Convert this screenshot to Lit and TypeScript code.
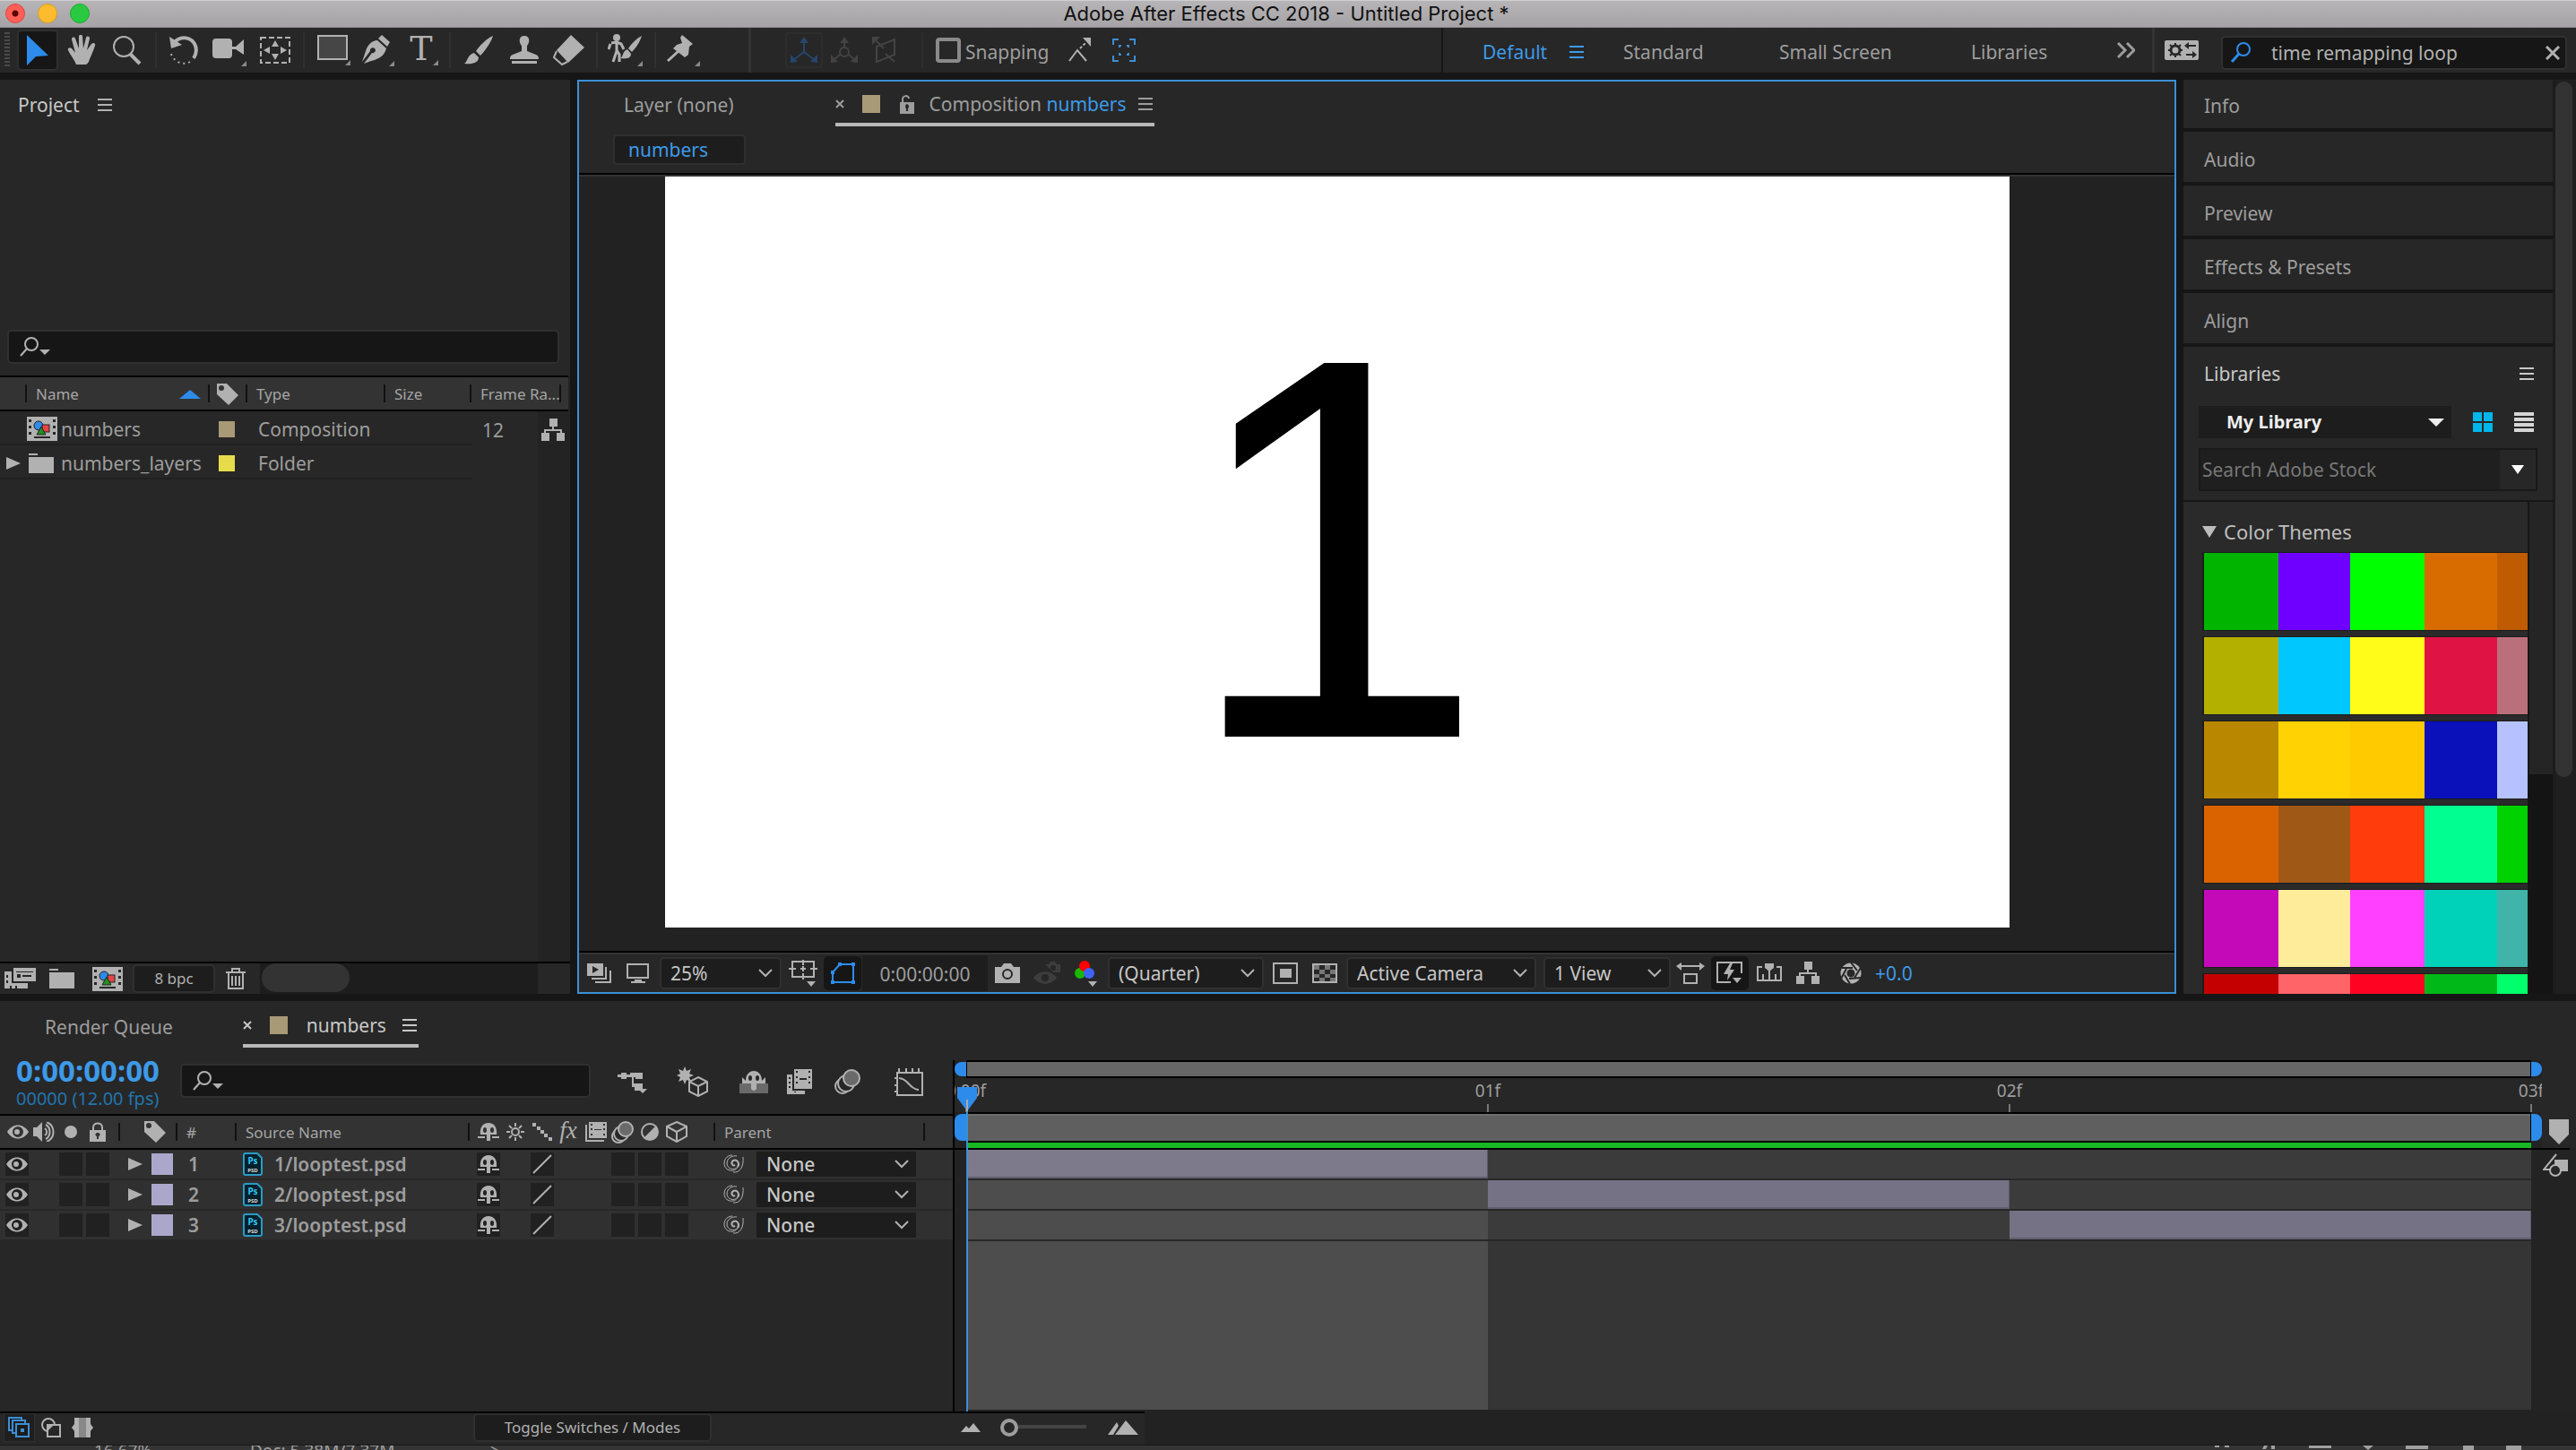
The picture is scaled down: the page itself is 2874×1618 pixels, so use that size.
import { LitElement, html, svg, css } from "lit";
import { customElement, state } from "lit/decorators.js";
import { classMap } from "lit/directives/class-map.js";
import { styleMap } from "lit/directives/style-map.js";

const glyph = (w: number, h: number, body: unknown) => html`<svg
  class="glyph" width=${w} height=${h} viewBox="0 0 ${w} ${h}" fill="currentColor" stroke="none" aria-hidden="true">${body}</svg>`;

const filmShapes = svg`
  <path fill-rule="evenodd" d="M0 0H34V27H0ZM2 3V6H5V3ZM2 10V13H5V10ZM2 17V20H5V17ZM29 3V6H32V3ZM29 10V13H32V10ZM29 17V20H32V17ZM8 22V24H26V22Z"/>
  <circle cx="13" cy="10" r="5" fill="#2d8ceb" stroke="#222" stroke-width="1"/>
  <rect x="17" y="9" width="8" height="8" fill="#e84545" stroke="#222" stroke-width="1"/>
  <path d="M16 11L21 20H11Z" fill="#1f8f1f" stroke="#222" stroke-width="1"/>`;

const shyShapes = svg`
  <path fill-rule="evenodd" d="M3 13C2 5 6 0 12 0S22 5 21 13H14V20H10V13ZM8 5A2 3 0 1 0 8 11A2 3 0 1 0 8 5ZM16 5A2 3 0 1 0 16 11A2 3 0 1 0 16 5Z"/>
  <path d="M0 15H8V17H0ZM16 15H24V17H16Z"/>`;

const flowShapes = svg`
  <path d="M9 0H18V9H9ZM0 16H9V25H0ZM17 16H26V25H17Z"/>
  <path d="M13 9V13M4 16V13H22V16" fill="none" stroke="currentColor" stroke-width="2"/>`;

const icons = {
  grip: glyph(8, 40, svg`<path d="M1 0V40" stroke="#4a4a4a" stroke-width="10" stroke-dasharray="2 2" fill="none"/>`),
  arrow: glyph(26, 36, svg`<path d="M1 1L25 24L11 25L1 35Z" fill="#2d8ceb"/>`),
  hand: glyph(32, 34, svg`<path d="M10 33C8 27 3 22 1 17C0 15 3 13 5 15L9 20L5 5C5 2 8 2 9 4L13 15L13 2C13 -1 17 -1 17 2L18 15L21 3C22 1 25 1 25 4L22 17L27 10C29 8 32 9 31 12C29 18 27 22 25 27C24 31 22 33 20 33Z"/>`),
  zoom: glyph(34, 34, svg`<circle cx="13" cy="13" r="11" fill="none" stroke="currentColor" stroke-width="2"/><path d="M20 21L31 32" stroke="currentColor" stroke-width="4"/>`),
  rotate: glyph(34, 34, svg`<path d="M6 9C13 0 26 2 30 12C32 18 30 23 28 26" fill="none" stroke="currentColor" stroke-width="4"/><path d="M1 2L3 15L15 11Z"/><path d="M24 30C15 35 4 29 2 18" fill="none" stroke="currentColor" stroke-width="2" stroke-dasharray="2 4"/>`),
  camera: glyph(40, 38, svg`<rect x="1" y="6" width="22" height="22" rx="4"/><path d="M23 15H27L36 7V24L27 18H23Z"/><path d="M39 31V37H33Z" fill="#8a8a8a"/>`),
  pan: glyph(34, 30, svg`<rect x="1" y="1" width="32" height="28" fill="none" stroke="currentColor" stroke-width="2" stroke-dasharray="6 3"/><path d="M17 4L21 11H13ZM17 26L21 19H13ZM4 15L11 11V19ZM30 15L23 11V19Z"/>`),
  rect: glyph(40, 36, svg`<rect x="3" y="2" width="32" height="26" fill="#464646" stroke="currentColor" stroke-width="2"/><path d="M39 29V35H33Z" fill="#8a8a8a"/>`),
  pen: glyph(38, 38, svg`<path d="M23 2L32 10L29 15L19 6ZM18 8L28 17C26 25 20 29 11 31L3 34L12 22A3 3 0 1 0 10 20L1 32L5 20C7 13 12 8 18 8Z"/><path d="M37 31V37H31Z" fill="#8a8a8a"/>`),
  type: glyph(38, 36, svg`<text x="18" y="29" text-anchor="middle" font-family="DejaVu Serif, serif" font-size="38">T</text><path d="M37 29V35H31Z" fill="#8a8a8a"/>`),
  brush: glyph(34, 34, svg`<path d="M33 1C31 8 24 18 19 23L14 18C18 12 26 4 33 1ZM12 20L17 25C17 31 10 33 1 32C5 30 4 22 12 20Z"/>`),
  stamp: glyph(34, 34, svg`<path d="M17 1C24 1 23 9 20 12V18L30 22C33 23 33 26 33 27H1C1 26 1 23 4 22L14 18V12C11 9 10 1 17 1ZM3 29H31V32H3Z"/>`),
  eraser: glyph(36, 36, svg`<path d="M20 1L35 15L17 32L4 18Z"/><path d="M4 19L1 26L10 34L16 31" fill="none" stroke="currentColor" stroke-width="2"/>`),
  roto: glyph(40, 38, svg`<circle cx="10" cy="5" r="4"/><path d="M4 11L10 10L15 12L18 18M3 12L1 18M10 10L10 20L6 32M10 19L13 24V32" fill="none" stroke="currentColor" stroke-width="3"/><path d="M38 3C36 10 31 17 27 21L23 17C27 11 32 6 38 3ZM22 18L26 23C26 28 21 29 14 28C18 26 16 20 22 18Z"/><path d="M39 31V37H33Z" fill="#8a8a8a"/>`),
  pin: glyph(40, 38, svg`<path d="M18 2L30 12L26 15L25 24L21 27L8 17L12 13L18 11L16 5Z"/><path d="M14 20L2 31" stroke="currentColor" stroke-width="3"/><path d="M38 31V37H32Z" fill="#8a8a8a"/>`),
  axisLocal: glyph(30, 30, svg`<path d="M15 3V17L3 26M15 17L27 26" fill="none" stroke="currentColor" stroke-width="2"/><path d="M15 0L20 7H10ZM0 29V20L8 28ZM30 29V20L22 28Z"/>`),
  axisWorld: glyph(30, 30, svg`<path d="M15 3V12M10 20L3 26M20 20L27 26" fill="none" stroke="currentColor" stroke-width="2"/><circle cx="15" cy="17" r="5" fill="none" stroke="currentColor" stroke-width="2"/><path d="M15 0L20 7H10ZM0 29V20L8 28ZM30 29V20L22 28Z"/>`),
  axisView: glyph(28, 30, svg`<path d="M5 11L25 3V20L5 28ZM2 2L13 13M15 19L25 28" fill="none" stroke="currentColor" stroke-width="2"/><path d="M0 0H9L0 9Z"/>`),
  snapEdge: glyph(30, 30, svg`<path d="M2 27L11 15L21 27" fill="none" stroke="currentColor" stroke-width="2"/><path d="M14 13L21 6" stroke="currentColor" stroke-width="2" stroke-dasharray="3 2"/><path d="M17 1H26V11Z"/>`),
  snapBox: glyph(26, 26, svg`<path d="M1 7V1H7M19 1H25V7M25 19V25H19M7 25H1V19M8 10V8H10M16 8H18V10M18 16V18H16M10 18H8V16" fill="none" stroke="currentColor" stroke-width="2"/>`),
  menu: glyph(16, 14, svg`<path d="M0 0H16V2H0ZM0 6H16V8H0ZM0 12H16V14H0Z"/>`),
  more: glyph(20, 22, svg`<path d="M1 1L9 9L1 17M11 1L19 9L11 17" fill="none" stroke="currentColor" stroke-width="3"/>`),
  sync: glyph(38, 22, svg`<rect width="38" height="22" rx="2"/><g stroke="#272727" fill="none"><circle cx="12" cy="11" r="5" stroke-width="3"/><path d="M12 3V6M12 16V19M4 11H7M17 11H20M6 5L8 7M16 15L18 17M18 5L16 7M8 15L6 17" stroke-width="2"/><path d="M35 6H26M24 16H33" stroke-width="2"/></g><path d="M27 2V10L22 6ZM31 12V20L36 16Z" fill="#272727"/>`),
  lensBlue: glyph(24, 24, svg`<circle cx="15" cy="8" r="7" fill="none" stroke="#2d8ceb" stroke-width="2"/><path d="M10 13L2 22" stroke="#2d8ceb" stroke-width="3"/>`),
  lens: glyph(34, 24, svg`<circle cx="13" cy="9" r="7" fill="none" stroke="currentColor" stroke-width="2"/><path d="M8 14L1 22" stroke="currentColor" stroke-width="2"/><path d="M22 15H34L28 21Z"/>`),
  close: glyph(16, 16, svg`<path d="M1 1L15 15M15 1L1 15" stroke="currentColor" stroke-width="3"/>`),
  closeSmall: glyph(10, 10, svg`<path d="M1 1L9 9M9 1L1 9" stroke="currentColor" stroke-width="2"/>`),
  unlock: glyph(18, 21, svg`<path d="M4 8V5C4 0 11 0 11 4" fill="none" stroke="currentColor" stroke-width="2"/><path fill-rule="evenodd" d="M1 8H17V21H1ZM9 10A3 3 0 0 0 8 15V18H10V15A3 3 0 0 0 9 10Z"/>`),
  lock: glyph(18, 22, svg`<path d="M4 10V6C4 0 14 0 14 6V10" fill="none" stroke="currentColor" stroke-width="2"/><path fill-rule="evenodd" d="M0 9H18V22H0ZM9 12A2 2 0 0 0 8 16V19H10V16A2 2 0 0 0 9 12Z"/>`),
  sort: glyph(24, 10, svg`<path d="M12 0L24 10H0Z" fill="#2d8ceb"/>`),
  tag: glyph(24, 24, svg`<path fill-rule="evenodd" d="M0 0H11L24 13L13 24L0 12ZM5 2A3 3 0 1 0 5 8A3 3 0 1 0 5 2Z"/>`),
  film: glyph(34, 27, filmShapes),
  folder: glyph(28, 22, svg`<path d="M0 0H10V2H0ZM0 4H28V22H0Z"/>`),
  flow: glyph(26, 25, flowShapes),
  twirl: glyph(16, 14, svg`<path d="M0 0L16 7L0 14Z"/>`),
  interpret: glyph(36, 24, svg`<path fill-rule="evenodd" d="M10 0H35V15H10ZM13 4V5H32V4ZM14 7V11H18V7ZM20 8V10H30V8Z"/><path fill-rule="evenodd" d="M0 4H8V17H26V23H0ZM2 8V11H4V8ZM2 14V17H4V14ZM6 20V23H8V20ZM12 20V23H14V20Z"/>`),
  trash: glyph(22, 24, svg`<path d="M0 4H22V6H0Z"/><path d="M7 4V1H15V4M3 6V23H19V6M7 9V20M11 9V20M15 9V20" fill="none" stroke="currentColor" stroke-width="2"/>`),
  stack: glyph(28, 22, svg`<path fill-rule="evenodd" d="M0 0H18V14H0ZM6 3V11L13 7Z"/><path d="M21 4V17H5M26 8V21H9" fill="none" stroke="currentColor" stroke-width="2"/>`),
  monitor: glyph(26, 22, svg`<rect x="1" y="1" width="23" height="15" fill="none" stroke="currentColor" stroke-width="2"/><path d="M9 18H17V20H21V22H5V20H9Z"/>`),
  grid: glyph(32, 30, svg`<path d="M4 2H28V19H4ZM16 0V6M16 15V22M0 10H8M24 10H32M13 10H19M16 7V13" fill="none" stroke="currentColor" stroke-width="2"/><path d="M20 24H30L25 30Z"/>`),
  mask: glyph(30, 26, svg`<path d="M4 23V12L12 3H27V23Z" fill="none" stroke="currentColor" stroke-width="2"/><path d="M2 21H6V25H2ZM25 21H29V25H25ZM25 1H29V5H25ZM10 1H14V5H10ZM2 10H6V14H2Z"/>`),
  snapshot: glyph(28, 22, svg`<path fill-rule="evenodd" d="M0 4H7L10 0H18L21 4H28V22H0ZM14 6A6 6 0 1 0 14 18A6 6 0 1 0 14 6Z"/><circle cx="14" cy="12" r="4"/>`),
  showSnap: glyph(30, 26, svg`<path d="M13 3H17L19 0H24L26 3H30V12H22" fill="currentColor"/><path d="M0 18C6 9 20 9 26 18C20 27 6 27 0 18Z"/><circle cx="13" cy="18" r="4" fill="#272727"/><circle cx="22" cy="7" r="3" fill="#272727"/>`),
  channels: glyph(26, 30, svg`<circle cx="6" cy="15" r="6" fill="#19b800"/><circle cx="11" cy="7" r="6" fill="#f00"/><circle cx="16" cy="15" r="6" fill="#3f63f5"/><path d="M15 24H25L20 30Z"/>`),
  roi: glyph(28, 24, svg`<rect x="1" y="1" width="26" height="22" fill="none" stroke="currentColor" stroke-width="2"/><rect x="8" y="7" width="13" height="10"/>`),
  checker: glyph(28, 22, svg`<rect x="1" y="1" width="26" height="20" fill="none" stroke="currentColor" stroke-width="2"/><path fill="#777" d="M2 2H8V7H2ZM14 2H20V7H14ZM8 7H14V12H8ZM20 7H26V12H20ZM2 12H8V16H2ZM14 12H20V16H14ZM8 16H14V20H8ZM20 16H26V20H20Z"/>`),
  aspect: glyph(32, 24, svg`<path d="M5 4H27M9 13H23V23H9Z" fill="none" stroke="currentColor" stroke-width="2"/><path d="M6 0V9L0 4ZM26 0V9L32 4Z"/>`),
  fast: glyph(30, 25, svg`<path d="M28 13V1H1V23H16" fill="none" stroke="currentColor" stroke-width="2"/><path d="M15 2L8 14H13L12 21L20 9H15L18 2ZM18 18H28L23 24Z"/>`),
  timelineBtn: glyph(28, 22, svg`<path d="M6 4H1V19H27V4H22M7 18V12M14 18V8M21 18V12" fill="none" stroke="currentColor" stroke-width="2"/><path d="M9 0H19V5L14 9L9 5Z"/>`),
  shutter: glyph(26, 24, svg`<circle cx="13" cy="12" r="8" fill="none" stroke="currentColor" stroke-width="7"/><path d="M13 0L20 9M24 6L17 17M24 17L11 18M12 24L6 14M2 18L8 7M3 6L15 6" stroke="#272727" stroke-width="2"/>`),
  caret: glyph(16, 10, svg`<path d="M1 1L8 8L15 1" fill="none" stroke="currentColor" stroke-width="2"/>`),
  caretFull: glyph(18, 9, svg`<path d="M0 0H18L9 9Z" fill="#eee"/>`),
  caretDown: glyph(14, 10, svg`<path d="M0 0H14L7 10Z" fill="#fff"/>`),
  opened: glyph(16, 13, svg`<path d="M0 0H16L8 13Z"/>`),
  tiles: glyph(22, 22, svg`<path fill="#00b6ea" d="M0 0H10V10H0ZM12 0H22V10H12ZM0 12H10V22H0ZM12 12H22V22H12Z"/>`),
  rows: glyph(22, 22, svg`<path fill="#d5d5d5" d="M0 0H22V4H0ZM0 6H22V10H0ZM0 12H22V16H0ZM0 18H22V22H0Z"/>`),
  eye: glyph(24, 16, svg`<path fill-rule="evenodd" d="M0 8C6 -2 18 -2 24 8C18 18 6 18 0 8ZM12 2A6 6 0 1 0 12 14A6 6 0 1 0 12 2Z"/><circle cx="11" cy="8" r="3"/>`),
  speaker: glyph(24, 22, svg`<path d="M0 6H4L10 0V22L4 16H0Z"/><path d="M13 7C16 9 16 13 13 15M14 3C20 6 20 16 14 19M15 0C25 4 25 18 15 22" fill="none" stroke="currentColor" stroke-width="2"/>`),
  dot: glyph(14, 14, svg`<circle cx="7" cy="7" r="7"/>`),
  shy: glyph(24, 20, shyShapes),
  sun: glyph(20, 20, svg`<circle cx="10" cy="10" r="4" fill="none" stroke="currentColor" stroke-width="2"/><path d="M10 0V4M10 16V20M0 10H4M16 10H20M3 3L6 6M14 14L17 17M17 3L14 6M6 14L3 17" stroke="currentColor" stroke-width="2"/>`),
  quality: glyph(22, 20, svg`<path d="M0 0H4V4H0ZM5 4H9V8H5ZM9 8H13V12H9ZM13 12H17V16H13ZM18 16H22V20H18Z"/>`),
  effects: glyph(26, 26, svg`<text x="12" y="20" text-anchor="middle" font-family="Liberation Serif, serif" font-style="italic" font-size="27">fx</text>`),
  blendFilm: glyph(24, 22, svg`<path d="M1 3V21H21" fill="none" stroke="currentColor" stroke-width="2"/><path fill-rule="evenodd" d="M4 0H24V18H4ZM6 2V4H8V2ZM6 7V9H8V7ZM6 13V15H8V13ZM20 2V4H22V2ZM20 7V9H22V7ZM20 13V15H22V13ZM10 8V9H18V8Z"/>`),
  blur: glyph(26, 25, svg`<g fill="#272727" stroke="currentColor" stroke-width="2"><circle cx="8" cy="17" r="7"/><circle cx="11" cy="14" r="8"/><circle cx="16" cy="9" r="8" fill="#6a6a6a"/></g>`),
  adjust: glyph(22, 22, svg`<circle cx="11" cy="11" r="9" fill="none" stroke="currentColor" stroke-width="2"/><path d="M18 4A10 10 0 0 1 4 18Z"/>`),
  cube: glyph(24, 24, svg`<path d="M12 1L23 6V17L12 23L1 17V6ZM1 6L12 12L23 6M12 12V23" fill="none" stroke="currentColor" stroke-width="2"/>`),
  slash: glyph(22, 22, svg`<path d="M1 21L21 1" stroke="currentColor" stroke-width="2"/>`),
  whip: glyph(24, 22, svg`<path d="M13 12C10 14 8 9 11 7C15 5 19 10 16 14C12 19 4 16 4 10C4 4 11 1 15 2M16 14C13 21 1 19 1 10C1 4 6 1 10 1M11 20C19 21 23 13 22 3" fill="none" stroke="currentColor" stroke-width="1"/><path d="M13 12C10 14 8 9 11 7C15 5 19 10 16 14" fill="none" stroke="currentColor" stroke-width="2"/>`),
  psd: glyph(22, 26, svg`<path d="M3 1H16L21 6V23C21 24 20 25 19 25H3C2 25 1 24 1 23V3C1 2 2 1 3 1Z" fill="#03202c" stroke="#2a9cc4" stroke-width="2"/><text x="11" y="13" text-anchor="middle" font-family="Noto Sans, sans-serif" font-weight="700" font-size="10" fill="#31c5f0">Ps</text><text x="11" y="22" text-anchor="middle" font-family="Noto Sans, sans-serif" font-weight="700" font-size="6" fill="#ddd">PSD</text>`),
  mini: glyph(34, 26, svg`<path d="M0 5H4V3H10V5H14V3H28V10H20V8H18V15H28V23H19V19H16V8H10V10H4V8H0Z"/><path d="M23 21H33L28 26Z"/>`),
  draft: glyph(36, 34, svg`<path d="M9 0L11 5L16 3L14 8L19 10L14 12L16 17L11 15L9 20L7 15L2 17L4 12L0 10L4 8L2 3L7 5Z"/><path d="M24 12L34 17V28L24 33L14 28V17ZM14 17L24 22L34 17M24 22V33" fill="#272727" stroke="currentColor" stroke-width="2"/>`),
  hideShy: glyph(32, 26, svg`<path d="M0 15H32V26H0Z" fill="#6a6a6a"/><path fill-rule="evenodd" d="M7 12C7 5 11 1 16 1S25 5 25 12L29 8V15H19V20C19 24 13 24 13 20V15H3V8ZM12 6A2 3 0 1 0 12 12A2 3 0 1 0 12 6ZM20 6A2 3 0 1 0 20 12A2 3 0 1 0 20 6Z"/>`),
  frameBlend: glyph(30, 28, svg`<path fill-rule="evenodd" d="M0 6H6V24H20V28H0ZM2 9V11H4V9ZM2 14V16H4V14ZM2 19V21H4V19ZM8 25V26H10V25Z"/><path fill-rule="evenodd" d="M8 0H28V22H8ZM10 2V4H12V2ZM10 8V10H12V8ZM10 14V16H12V14ZM24 2V4H26V2ZM24 8V10H26V8ZM24 14V16H26V14ZM14 10V12H22V10Z"/>`),
  motionBlur: glyph(30, 29, svg`<g fill="#272727" stroke="currentColor" stroke-width="2"><circle cx="9" cy="19" r="8"/><circle cx="13" cy="16" r="9"/><circle cx="19" cy="10" r="9" fill="#6a6a6a"/></g>`),
  graph: glyph(34, 32, svg`<path d="M4 6H32V31H4ZM6 12C16 12 18 25 28 25M6 1V6M14 1V6M21 1V6M28 1V6M1 12H4M1 20H4M1 27H4" fill="none" stroke="currentColor" stroke-width="2"/>`),
  playhead: glyph(22, 27, svg`<path d="M0 0H22V12L11 27L0 12Z" fill="#2d8ceb"/><path d="M11 14V27" stroke="#aaa" stroke-width="2"/>`),
  marker: glyph(24, 28, svg`<path d="M1 0H23V17L12 28L1 17Z"/>`),
  compBtn: glyph(30, 27, svg`<path d="M13 7H28V20H13Z"/><path d="M15 1L1 18H13" fill="none" stroke="currentColor" stroke-width="2"/><circle cx="14" cy="19" r="6" fill="#272727" stroke="currentColor" stroke-width="2"/>`),
  layersPane: glyph(26, 24, svg`<g fill="#1c1c1c" stroke="#3b8fd6" stroke-width="2"><rect x="1" y="1" width="14" height="14"/><rect x="5" y="4" width="14" height="14"/><rect x="9" y="8" width="14" height="14"/></g><rect x="14" y="13" width="4" height="4" fill="#3b8fd6"/>`),
  modesPane: glyph(24, 22, svg`<circle cx="9" cy="8" r="7" fill="none" stroke="currentColor" stroke-width="2"/><path d="M8 8H22V21H8Z" fill="#272727" stroke="currentColor" stroke-width="2"/><path d="M8 15L15 8H8Z"/>`),
  timePane: glyph(24, 22, svg`<path d="M3 0H10V22H3V15L0 11L3 7ZM14 0H21V7L24 11L21 15V22H14Z"/><path d="M8 0H16V22H8Z" fill="#888"/>`),
  hillSmall: glyph(22, 10, svg`<path d="M0 10L6 3L9 6L14 0L22 10Z"/>`),
  hillLarge: glyph(34, 16, svg`<path d="M0 16L10 2L12 6L6 16ZM8 16L20 0L34 16Z"/>`),
  shelf: glyph(346, 5, svg`<path d="M3 0H8V2H3ZM14 0H19V2H14ZM58 0H62L60 4H56ZM66 0H70V4H66ZM108 0H133V3H108ZM168 0H180L174 5ZM216 0H241V4H216ZM280 0H292V5H280ZM328 0H345V5H328Z"/>`),
};

type IconName = keyof typeof icons;

const tools: { icon?: IconName; label?: string; on?: boolean }[] = [
  { icon: "arrow", label: "Selection", on: true },
  { icon: "hand", label: "Hand" },
  { icon: "zoom", label: "Zoom" },
  {},
  { icon: "rotate", label: "Rotation" },
  { icon: "camera", label: "Camera" },
  { icon: "pan", label: "Pan behind" },
  {},
  { icon: "rect", label: "Rectangle" },
  { icon: "pen", label: "Pen" },
  { icon: "type", label: "Type" },
  {},
  { icon: "brush", label: "Brush" },
  { icon: "stamp", label: "Clone stamp" },
  { icon: "eraser", label: "Eraser" },
  {},
  { icon: "roto", label: "Roto brush" },
  {},
  { icon: "pin", label: "Puppet pin" },
];

const themes = [
  ["#00b400", "#6f00ff", "#00ff00", "#d86c00", "#bf5b00"],
  ["#b4b000", "#00c8ff", "#fffc1a", "#df1444", "#ba707a"],
  ["#ba8700", "#ffd204", "#ffca00", "#0a10ba", "#b5c2ff"],
  ["#da6300", "#a05816", "#ff3c0c", "#00ff90", "#00d200"],
  ["#c409b9", "#ffec9b", "#ff40ff", "#00d2ba", "#40b4a8"],
  ["#c40000", "#ff6469", "#ff0422", "#00b817", "#00ff6a"],
];

const base = css`
  :host { display: block; box-sizing: border-box; min-width: 0; min-height: 0; }
  *, *::before, *::after { box-sizing: border-box; }
  button, select, input { font: inherit; color: inherit; background: none; border: 0; margin: 0; padding: 0; border-radius: 0; min-width: 0; appearance: none; }
  button { display: flex; align-items: center; justify-content: center; }
  a { color: inherit; text-decoration: none; }
  h2 { margin: 0; font: inherit; }
  .glyph { display: block; flex: none; }
  table { border-collapse: separate; border-spacing: 0; table-layout: fixed; }
  th, td { padding: 0; font-weight: inherit; text-align: left; }
  .tab { display: flex; align-items: center; }
  .chip { display: block; width: 20px; height: 20px; background: #a89977; }
  .search { display: flex; align-items: center; height: 38px; border: 2px solid #303030; border-radius: 5px; background: #161616; }
  .search input { flex: 1; height: 100%; outline: none; }
  .pick { display: grid; align-items: center; border: 2px solid #303030; border-radius: 5px; background: #1d1d1d; color: #c6c6c6; }
  .pick > * { grid-area: 1 / 1; }
  .pick select { height: 100%; width: 100%; padding: 0 10px; }
  .pick .glyph { justify-self: end; margin-right: 8px; pointer-events: none; color: #b1b1b1; }
`;

@customElement("ae-toolbar")
class AeToolbar extends LitElement {
  static styles = [base, css`
    :host { display: flex; align-items: stretch; background: #272727; color: #b1b1b1; }
    .tools { display: grid; grid-template-columns: 18px 48px 50px 52px 12px 50px 52px 50px 14px 52px 48px 50px 12px 52px 50px 50px 12px 52px 14px 50px; align-items: center; justify-items: center; width: 838px; border-right: 3px solid #333; }
    .tool.on { width: 46px; height: 46px; background: #161616; border: 2px solid #2f2f2f; border-radius: 5px; }
    .rule { width: 2px; height: 40px; background: #303030; }
    .axes { display: grid; grid-template-columns: 44px 44px 46px; align-items: center; margin-left: 38px; width: 154px; color: #434343; border-right: 2px solid #2e2e2e; height: 40px; align-self: center; }
    .axes .on { height: 40px; width: 42px; border: 2px solid #2d2d2d; border-radius: 4px; color: #26466a; }
    .snap { display: flex; align-items: center; gap: 5px; margin-left: 14px; color: #9d9d9d; }
    .snap input { width: 28px; height: 28px; border: 4px solid #8a8a8a; border-radius: 4px; }
    .snap label { padding-top: 4px; }
    .edge { margin-left: 21px; }
    .box { margin-left: 20px; color: #3b8fd6; }
    .spaces { margin-left: auto; display: grid; grid-template-columns: 97px 60px 174px 214px 163px 38px; align-items: center; width: 796px; border-left: 2px solid #161616; border-right: 3px solid #333; padding: 4px 0 0 44px; color: #9d9d9d; }
    .active { color: #3d9ae8; }
    .spaces button { justify-content: flex-start; }
    .sync { width: 60px; margin-right: 14px; }
    .search { width: 386px; margin: 9px 10px 0 0; padding: 0 6px 0 8px; }
    .search input { padding-left: 22px; }
  `];
  render() {
    return html`
      <div class="tools">${icons.grip}
        ${tools.map((t) => t.icon
          ? html`<button class=${classMap({ tool: true, on: !!t.on })} aria-label=${t.label!}>${icons[t.icon]}</button>`
          : html`<span class="rule"></span>`)}
      </div>
      <div class="axes">
        <button class="on" aria-label="Local axis">${icons.axisLocal}</button>
        <button aria-label="World axis">${icons.axisWorld}</button>
        <button aria-label="View axis">${icons.axisView}</button>
      </div>
      <div class="snap"><input id="snap" type="checkbox" /><label for="snap">Snapping</label></div>
      <button class="edge" aria-label="Snap edges">${icons.snapEdge}</button>
      <button class="box" aria-label="Snap bounds">${icons.snapBox}</button>
      <nav class="spaces">
        <a class="active" href="#default">Default</a>
        <button class="active" aria-label="Workspace menu">${icons.menu}</button>
        <a href="#standard">Standard</a><a href="#small">Small Screen</a><a href="#libraries">Libraries</a>
        <button aria-label="More workspaces">${icons.more}</button>
      </nav>
      <button class="sync" aria-label="Sync settings">${icons.sync}</button>
      <div class="search">${icons.lensBlue}<input aria-label="Search help" .value=${"time remapping loop"} />
        <button aria-label="Clear search">${icons.close}</button></div>`;
  }
}

@customElement("ae-project")
class AeProject extends LitElement {
  static styles = [base, css`
    :host { display: flex; flex-direction: column; background: #272727; color: #9d9d9d; }
    .head { display: flex; align-items: center; gap: 20px; height: 56px; padding-left: 20px; color: #c8c8c8; }
    .preview { height: 223px; }
    .search { margin: 0 12px 13px 8px; padding-left: 12px; color: #b1b1b1; }
    .list { flex: 1; min-height: 0; background: linear-gradient(90deg, #272727 600px, #232323 600px); }
    table { width: 634px; }
    th { height: 40px; border-top: 2px solid #000; border-bottom: 2px solid #000; font-size: 17px; padding: 2px 0 0 10px; background: linear-gradient(#111, #111) right center / 2px 20px no-repeat #333; color: #a5a5a5; white-space: nowrap; }
    th.end { background-image: none; }
    th.tagcol { padding-left: 8px; }
    .sorted { display: flex; align-items: center; justify-content: space-between; padding-right: 10px; }
    .glyph { color: #b1b1b1; }
    td { height: 38px; border-bottom: 2px solid #202020; padding-top: 3px; }
    td:last-child { border-bottom: 0; }
    td.twist { padding-left: 7px; }
    td.type { padding-left: 12px; }
    .item { display: flex; align-items: center; }
    .art { display: flex; width: 38px; }
    .folder { padding-left: 2px; }
    .label { display: block; width: 18px; height: 18px; margin-left: 10px; background: #a89977; }
    .yellow { background: #e6dc4b; }
    .rate { display: flex; align-items: center; justify-content: space-between; padding: 0 4px 0 12px; }
    .foot { display: grid; grid-template-columns: 46px 46px 56px 92px 46px 1fr; align-items: center; height: 36px; color: #b1b1b1; border-top: 2px solid #000; }
    .bits { height: 32px; width: 92px; border: 2px solid #303030; border-radius: 5px; background: #1d1d1d; font-size: 17px; }
    .track { height: 34px; background: #1d1d1d; margin: 0 36px 0 4px; }
    .thumb { display: block; width: 98px; height: 32px; margin-left: 2px; border-radius: 16px; background: #333; }
  `];
  render() {
    return html`
      <div class="head"><h2>Project</h2><button aria-label="Project menu">${icons.menu}</button></div>
      <div class="preview"></div>
      <div class="search">${icons.lens}<input aria-label="Search project" /></div>
      <div class="list">
        <table>
          <colgroup><col width="30" /><col width="204" /><col width="42" /><col width="154" /><col width="96" /><col width="100" /><col width="8" /></colgroup>
          <thead><tr><th></th><th><span class="sorted">Name ${icons.sort}</span></th><th class="tagcol">${icons.tag}</th><th>Type</th><th>Size</th><th>Frame Ra...</th><th class="end"></th></tr></thead>
          <tbody>
            <tr><td></td><td><span class="item"><span class="art">${icons.film}</span>numbers</span></td><td><span class="label"></span></td>
              <td class="type">Composition</td><td></td><td colspan="2"><span class="rate">12 ${icons.flow}</span></td></tr>
            <tr><td class="twist">${icons.twirl}</td><td><span class="item"><span class="art folder">${icons.folder}</span>numbers_layers</span></td><td><span class="label yellow"></span></td>
              <td class="type">Folder</td><td></td><td colspan="2"></td></tr>
          </tbody>
        </table>
      </div>
      <div class="foot">
        <button aria-label="Interpret footage">${icons.interpret}</button>
        <button aria-label="New folder">${icons.folder}</button>
        <button aria-label="New composition">${icons.film}</button>
        <button class="bits">8 bpc</button>
        <button aria-label="Delete">${icons.trash}</button>
        <div class="track"><span class="thumb"></span></div>
      </div>`;
  }
}

@customElement("ae-composition")
class AeComposition extends LitElement {
  static styles = [base, css`
    :host { display: flex; flex-direction: column; background: #272727; border: 2px solid #3b8fd6; color: #9d9d9d; }
    .tabs { display: flex; align-items: flex-start; height: 58px; padding-left: 50px; }
    .tab { height: 50px; }
    .current { margin-left: 113px; border-bottom: 4px solid #b9b9b9; padding: 4px 2px 0 0; width: 356px; }
    .chip { margin: 0 21px 0 20px; flex: none; }
    .title { margin: 0 auto 0 16px; white-space: pre; }
    .title a, .blue { color: #3d9ae8; }
    .plain { padding-top: 2px; }
    .crumbs { height: 44px; }
    .crumb { width: 148px; height: 34px; margin: 1px 0 0 38px; padding-left: 15px; justify-content: flex-start; border: 2px solid #2f2f2f; background: #1d1d1d; color: #3d9ae8; border-radius: 4px; }
    .view { flex: 1; min-height: 0; display: flex; padding: 0 184px 26px 96px; background: #222; border-top: 2px solid #000; box-shadow: inset 0 2px #333; }
    .canvas { flex: 1; display: flex; align-items: center; justify-content: center; overflow: hidden; background: #fff; color: #000; margin-top: 2px; padding: 0 6px 8px 0; font: 606px/1 "Liberation Sans", Arial, sans-serif; }
    .foot { display: grid; grid-template-columns: 42px 44px 140px 44px 44px 140px 44px 44px 44px 178px 44px 44px 216px 148px 44px 44px 44px 42px 54px 80px; align-items: center; justify-items: center; height: 46px; padding: 1px 0 0 2px; border-top: 2px solid #000; box-shadow: inset 0 2px #333; color: #b1b1b1; background: #272727; }
    .pick { width: calc(100% - 4px); height: 36px; }
    .pick:last-of-type { justify-self: end; width: 142px; }
    .on { width: 42px; height: 38px; background: #161616; border-radius: 5px; }
    .mask { color: #2d8ceb; }
    .time { width: 140px; height: 40px; background: #1d1d1d; color: #9d9d9d; padding-top: 3px; }
    .dim { color: #3d3d3d; }
    .blue { justify-self: start; }
  `];
  private pick(label: string, value: string) {
    return html`<div class="pick"><select aria-label=${label}><option>${value}</option></select>${icons.caret}</div>`;
  }
  render() {
    return html`
      <div class="tabs">
        <a class="tab plain" href="#layer">Layer (none)</a>
        <div class="tab current"><button aria-label="Close tab">${icons.closeSmall}</button><span class="chip"></span>
          ${icons.unlock}<span class="title">Composition <a href="#numbers">numbers</a></span><button aria-label="Composition menu">${icons.menu}</button></div>
      </div>
      <div class="crumbs"><button class="crumb">numbers</button></div>
      <div class="view"><div class="canvas">1</div></div>
      <div class="foot">
        <button aria-label="Always preview">${icons.stack}</button>
        <button aria-label="Primary viewer">${icons.monitor}</button>
        ${this.pick("Magnification", "25%")}
        <button aria-label="Grid and guides">${icons.grid}</button>
        <button class="on mask" aria-label="Mask visibility">${icons.mask}</button>
        <button class="time">0:00:00:00</button>
        <button aria-label="Take snapshot">${icons.snapshot}</button>
        <button class="dim" aria-label="Show snapshot">${icons.showSnap}</button>
        <button aria-label="Channels">${icons.channels}</button>
        ${this.pick("Resolution", "(Quarter)")}
        <button aria-label="Region of interest">${icons.roi}</button>
        <button aria-label="Transparency grid">${icons.checker}</button>
        ${this.pick("3D view", "Active Camera")}
        ${this.pick("View layout", "1 View")}
        <button aria-label="Pixel aspect">${icons.aspect}</button>
        <button class="on" aria-label="Fast previews">${icons.fast}</button>
        <button aria-label="Timeline">${icons.timelineBtn}</button>
        <button aria-label="Flowchart">${icons.flow}</button>
        <button aria-label="Reset exposure">${icons.shutter}</button>
        <button class="blue">+0.0</button>
      </div>`;
  }
}

@customElement("ae-libraries")
class AeLibraries extends LitElement {
  static styles = [base, css`
    :host { display: grid; grid-template-columns: minmax(0, 1fr) 26px; background: #161616; color: #9d9d9d; }
    .stack { display: flex; flex-direction: column; min-height: 0; background: #272727; }
    .fold { display: flex; align-items: center; justify-content: flex-start; flex: none; height: 60px; margin: -2px 0 2px; padding: 5px 0 0 23px; border-bottom: 4px solid #161616; }
    .head { display: flex; flex: none; align-items: center; justify-content: space-between; height: 60px; padding: 0 21px 4px 23px; color: #c8c8c8; }
    .bar { display: flex; align-items: center; height: 36px; flex: none; padding: 0 21px 0 17px; margin-top: 4px; }
    .pick { flex: 1; height: 36px; border: 0; border-radius: 0; font-weight: 700; font-size: 20px; color: #eee; }
    .pick select { padding-left: 31px; }
    .tiles { margin: 0 24px; }
    .stock { display: flex; flex: none; height: 48px; margin: 11px 17px 10px 17px; border: 2px solid #191919; background: #1f1f1f; color: #777; }
    .stock input { flex: 1; padding-left: 2px; outline: none; }
    .stock input::placeholder { color: #777; opacity: 1; }
    .stock button { width: 40px; background: #272727; }
    .body { display: grid; flex: 1; min-height: 0; grid-template-columns: minmax(0, 1fr) 28px; border-top: 2px solid #161616; background: #2a2a2a; }
    .scroll { background: #141414; }
    .scroll span { display: block; height: 304px; background: #252525; border-left: 2px solid #161616; }
    .themes { overflow: hidden; padding-left: 21px; display: flex; flex-direction: column; gap: 6px; }
    .group { flex: none; height: 50px; padding-top: 16px; justify-content: flex-start; gap: 8px; font-size: 22px; color: #bdbdbd; line-height: 34px; }
    .theme { display: grid; flex: none; grid-template-columns: 82fr 80fr 82fr 80fr 34fr; height: 88px; border: 1px solid #1c1c1c; border-width: 1px 0 1px 2px; }
    .rail { border-left: 3px solid #1c1c1c; padding: 2px 4px 0 0; background: #1f1f1f; }
    .thumb { display: block; width: 100%; height: 776px; border-radius: 9px; background: #333; }
  `];
  render() {
    return html`
      <div class="stack">
        ${["Info", "Audio", "Preview", "Effects & Presets", "Align"].map((n) => html`<button class="fold">${n}</button>`)}
        <div class="head"><h2>Libraries</h2><button aria-label="Libraries menu">${icons.menu}</button></div>
        <div class="bar">
          <div class="pick"><select aria-label="Library"><option>My Library</option></select>${icons.caretFull}</div>
          <button class="tiles" aria-label="Show as tiles">${icons.tiles}</button>
          <button aria-label="Show as list">${icons.rows}</button>
        </div>
        <div class="stock"><input aria-label="Search Adobe Stock" placeholder="Search Adobe Stock" /><button aria-label="Search source">${icons.caretDown}</button></div>
        <div class="body">
          <div class="themes">
            <button class="group" aria-expanded="true">${icons.opened}Color Themes</button>
            ${themes.map((row) => html`<div class="theme">${row.map((c) => html`<span style=${styleMap({ background: c })}></span>`)}</div>`)}
          </div>
          <div class="scroll"><span></span></div>
        </div>
      </div>
      <div class="rail"><span class="thumb"></span></div>`;
  }
}

const switches: IconName[] = ["shy", "sun", "quality", "effects", "blendFilm", "blur", "adjust", "cube"];
const layers = ["1/looptest.psd", "2/looptest.psd", "3/looptest.psd"];
const frames = ["0:00f", "01f", "02f", "03f"];

@customElement("ae-timeline")
class AeTimeline extends LitElement {
  static styles = [base, css`
    :host { display: grid; grid-template-columns: 1063px minmax(0, 1fr) 38px; grid-template-rows: minmax(0, 1fr) 37px; background: #272727; color: #9d9d9d; }
    .left { min-height: 0; overflow: hidden; }
    .tabs { display: flex; height: 52px; padding-left: 50px; }
    .tab { padding-top: 6px; }
    .current { width: 196px; margin-left: 78px; border-bottom: 4px solid #b9b9b9; color: #c8c8c8; }
    .chip { margin: 0 21px 0 20px; }
    .menu { margin-left: auto; padding-right: 2px; }
    .bar { display: grid; grid-template-columns: 201px 458px 1fr; align-items: start; height: 74px; }
    .now { padding-left: 18px; margin-top: 10px; display: grid; justify-content: start; justify-items: start; }
    .code { font-size: 33px; font-weight: 700; color: #3d9ae8; line-height: 32px; }
    .fps { font-size: 20px; color: #2274ad; line-height: 30px; }
    .search { margin-top: 18px; padding-left: 12px; color: #b1b1b1; }
    .acts { display: grid; grid-template-columns: 64px 70px 66px 38px 68px 68px; align-items: center; justify-items: center; height: 36px; margin-top: 20px; padding-left: 15px; color: #b1b1b1; }
    table { width: 1063px; }
    th { height: 40px; border-top: 2px solid #000; border-bottom: 2px solid #000; background: #333; font-size: 17px; color: #b1b1b1; }
    th .glyph { margin: 0 auto; }
    .sep { background: linear-gradient(#111, #111) right center / 2px 20px no-repeat #333; }
    .text { padding: 2px 0 0 10px; color: #a5a5a5; }
    .tagcol { padding-left: 14px; }
    td { height: 34px; background: #303030; border-bottom: 2px solid #282828; }
    .cell { display: flex; align-items: center; justify-content: center; width: 26px; height: 26px; margin: 0 auto; color: #b1b1b1; }
    .dark { background: #212121; }
    .eyes { margin-left: 6px; }
    .eyehead { padding-left: 6px; }
    .mark { display: flex; align-items: center; gap: 10px; padding-left: 9px; color: #b1b1b1; }
    .label { display: block; width: 24px; height: 24px; background: #aba7cb; }
    .num { padding-left: 12px; font-weight: 600; }
    .name { display: flex; align-items: center; gap: 13px; padding-left: 7px; font-weight: 600; }
    .parent { display: flex; align-items: center; gap: 13px; padding-left: 9px; color: #b1b1b1; }
    .pick { width: 178px; height: 28px; border: 0; border-radius: 0; }
    .pick select { padding-left: 11px; font-weight: 500; }
    .right { position: relative; display: flex; flex-direction: column; min-height: 0; margin-top: 66px; border-left: 2px solid #000; overflow: hidden; background: #232323; }
    .nav, .work { display: grid; grid-template-columns: 13px minmax(0, 1fr) 12px; flex: none; }
    .nav { height: 20px; }
    .nav .span { border: 2px solid #000; border-width: 2px 1px; background: #676767; }
    .work { height: 34px; }
    .work .span { border: 2px solid #000; border-width: 2px 1px; background: #5f5f5f; box-shadow: inset 0 2px #6e6e6e; }
    .nav button, .work button { background: #2d8ceb; margin: 2px 0; }
    .lh { border-radius: 8px 0 0 8px; }
    .rh { border-radius: 0 8px 8px 0; }
    .ruler { position: relative; flex: none; height: 38px; margin: 0 12px 0 13px; font-size: 19px; background: #272727; box-shadow: 13px 0 #272727, -13px 0 #272727; }
    .tick { position: absolute; top: 0; bottom: 0; width: 60px; margin-left: -30px; display: grid; justify-items: center; align-content: space-between; line-height: 28px; }
    .tick i { width: 2px; height: 9px; background: #777; }
    .cache { flex: none; height: 6px; margin: 0 12px 0 14px; background: #18b824; }
    .lanes { flex: 1; border-top: 2px solid #000; padding: 0 12px 2px 13px; min-height: 0; display: flex; flex-direction: column; }
    .lane { display: grid; flex: none; grid-template-columns: repeat(3, minmax(0, 1fr)); height: 34px; border-bottom: 2px solid #282828; background: linear-gradient(90deg, #4d4d4d 33.33%, #3b3b3b 33.33%); }
    .bar-0, .bar-1, .bar-2 { background: #747284; border-bottom: 2px solid #615f6e; border-right: 1px solid #5c5a68; }
    .bar-0 { grid-column: 1; background: #7d7b8b; }
    .bar-1 { grid-column: 2; }
    .bar-2 { grid-column: 3; }
    .empty { flex: 1; background: linear-gradient(90deg, #4d4d4d 33.33%, #353535 33.33%); }
    .head { position: absolute; left: 3px; top: 30px; bottom: 0; width: 22px; display: flex; flex-direction: column; align-items: center; }
    .head span { flex: 1; width: 2px; background: #3b8fd6; }
    .side { display: flex; flex-direction: column; align-items: flex-end; padding: 132px 7px 0 0; color: #b1b1b1; background: linear-gradient(#272727 0 0) 0 0 / 100% 164px no-repeat #232323; }
    .side button + button { margin-top: 4px; border-top: 2px solid #000; padding-top: 4px; width: 100%; }
    .foot { grid-column: 1 / 4; background: #222; }
    .controls { display: flex; align-items: center; height: 37px; width: 1277px; padding-bottom: 3px; border-top: 2px solid #000; background: #272727; color: #b1b1b1; }
    .pane { width: 35px; height: 32px; }
    .pane.on { margin-left: 4px; background: #1f1f1f; border: 1px solid #303030; }
    .toggle { margin-left: 419px; width: 266px; height: 32px; font-size: 17px; border: 2px solid #2f2f2f; border-radius: 5px; background: #1d1d1d; }
    .small { margin-left: 278px; }
    .zoom { width: 96px; margin: 0 24px 0 22px; height: 22px; background: linear-gradient(#444, #444) right 8px / 76px 4px no-repeat; }
    .zoom::-webkit-slider-thumb { appearance: none; width: 20px; height: 20px; border: 4px solid #9d9d9d; border-radius: 50%; background: #272727; }
  `];
  @state() private zoom = 0;
  render() {
    return html`
      <div class="left">
        <div class="tabs">
          <a class="tab" href="#queue">Render Queue</a>
          <div class="tab current"><button aria-label="Close tab">${icons.closeSmall}</button><span class="chip"></span>numbers
            <button class="menu" aria-label="Timeline menu">${icons.menu}</button></div>
        </div>
        <div class="bar">
          <div class="now"><span class="code">0:00:00:00</span><span class="fps">00000 (12.00 fps)</span></div>
          <div class="search">${icons.lens}<input aria-label="Search layers" /></div>
          <div class="acts">
            <button aria-label="Mini flowchart">${icons.mini}</button><button aria-label="Draft 3D">${icons.draft}</button>
            <button aria-label="Hide shy layers">${icons.hideShy}</button><button aria-label="Frame blending">${icons.frameBlend}</button>
            <button aria-label="Motion blur">${icons.motionBlur}</button><button aria-label="Graph editor">${icons.graph}</button>
          </div>
        </div>
        <table>
          <colgroup><col width="34" /><col width="30" /><col width="30" /><col width="30" /><col width="10" /><col width="64" /><col width="66" /><col width="260" /><col width="6" />
            ${switches.map(() => html`<col width="30" />`)}<col width="28" /><col width="234" /><col width="31" /></colgroup>
          <thead><tr>
            <th class="eyehead">${icons.eye}</th><th>${icons.speaker}</th><th>${icons.dot}</th><th>${icons.lock}</th><th class="sep"></th>
            <th class="sep tagcol">${icons.tag}</th><th class="sep text">#</th><th class="sep text">Source Name</th><th></th>
            ${switches.map((s) => html`<th>${icons[s]}</th>`)}<th class="sep"></th><th class="sep text">Parent</th><th></th>
          </tr></thead>
          <tbody>${layers.map((name, i) => html`<tr>
            <td><span class="cell dark eyes">${icons.eye}</span></td><td></td><td><span class="cell dark"></span></td><td><span class="cell dark"></span></td><td></td>
            <td><span class="mark">${icons.twirl}<span class="label"></span></span></td><td class="num">${i + 1}</td>
            <td><span class="name">${icons.psd}${name}</span></td><td></td>
            <td><span class="cell dark">${icons.shy}</span></td><td></td><td><span class="cell dark">${icons.slash}</span></td><td></td><td></td>
            <td><span class="cell dark"></span></td><td><span class="cell dark"></span></td><td><span class="cell dark"></span></td><td></td>
            <td><span class="parent">${icons.whip}<span class="pick"><select aria-label="Parent of ${name}"><option>None</option></select>${icons.caret}</span></span></td><td></td>
          </tr>`)}</tbody>
        </table>
      </div>
      <div class="right">
        <div class="nav"><button class="lh" aria-label="View start"></button><span class="span"></span><button class="rh" aria-label="View end"></button></div>
        <div class="ruler">${frames.map((f, i) => html`<span class="tick" style=${styleMap({ left: `${(i * 100) / 3}%` })}>${f}<i></i></span>`)}</div>
        <div class="work"><button class="lh" aria-label="Work area start"></button><span class="span"></span><button class="rh" aria-label="Work area end"></button></div>
        <div class="cache"></div>
        <div class="lanes">${layers.map((_, i) => html`<div class="lane"><span class="bar-${i}"></span></div>`)}<div class="empty"></div></div>
        <div class="head">${icons.playhead}<span></span></div>
      </div>
      <div class="side"><button aria-label="Add marker">${icons.marker}</button><button aria-label="Composition button">${icons.compBtn}</button></div>
      <div class="foot"><div class="controls">
        <button class="pane on" aria-label="Layer switches">${icons.layersPane}</button>
        <button class="pane" aria-label="Transfer controls">${icons.modesPane}</button>
        <button class="pane" aria-label="In and out">${icons.timePane}</button>
        <button class="toggle">Toggle Switches / Modes</button>
        <span class="small">${icons.hillSmall}</span>
        <input class="zoom" type="range" aria-label="Timeline zoom" min="0" max="100" .value=${String(this.zoom)} />
        ${icons.hillLarge}
      </div></div>`;
  }
}

@customElement("app-root")
class AppRoot extends LitElement {
  static styles = [base, css`
    :host { display: grid; height: 100vh; overflow: hidden; grid-template-rows: 31px 50px minmax(0, 1036fr) minmax(0, 495fr) 6px; background: #161616; font: 21px/28px "Noto Sans", "Open Sans", sans-serif; }
    .title { display: grid; grid-template-columns: 1fr auto 1fr; align-items: center; padding: 0 10px 0 6px; background: linear-gradient(#b8b5b8, #a5a3a5); border-bottom: 1px solid #8c8c8c; box-shadow: inset 0 1px #cfcfcf; color: #111; font: 22px/28px Inter, "Liberation Sans", sans-serif; }
    .lights { display: flex; gap: 14px; }
    .light { width: 22px; height: 22px; border-radius: 50%; background: #fdbc2e; border: 1px solid #dc9d20; }
    .red { background: radial-gradient(circle, #5a0000 3px, #ff5f57 4px); border-color: #df453e; }
    .green { background: #29ca41; border-color: #1aab29; }
    .panes { display: grid; grid-template-columns: 636px minmax(0, 1fr) 438px; column-gap: 8px; padding: 8px 0; min-height: 0; }
    .behind { display: flex; overflow: hidden; height: 6px; background: #343434; border-top: 1px solid #181818; color: #a0a0a0; font-size: 19px; line-height: 12px; padding: 0 60px 0 105px; }
    .behind span { width: 174px; flex: none; }
    .behind .doc { width: 268px; }
    .behind .glyph { margin-left: auto; }
  `];
  render() {
    return html`
      <header class="title"><div class="lights"><button class="light red" aria-label="Close"></button><button class="light" aria-label="Minimize"></button><button class="light green" aria-label="Zoom"></button></div>
        <span>Adobe After Effects CC 2018 - Untitled Project *</span></header>
      <ae-toolbar></ae-toolbar>
      <main class="panes"><ae-project></ae-project><ae-composition></ae-composition><ae-libraries></ae-libraries></main>
      <ae-timeline></ae-timeline>
      <footer class="behind"><span>16.67%</span><span class="doc">Doc: 5.38M/7.37M</span><span>&gt;</span>${icons.shelf}</footer>`;
  }
}
